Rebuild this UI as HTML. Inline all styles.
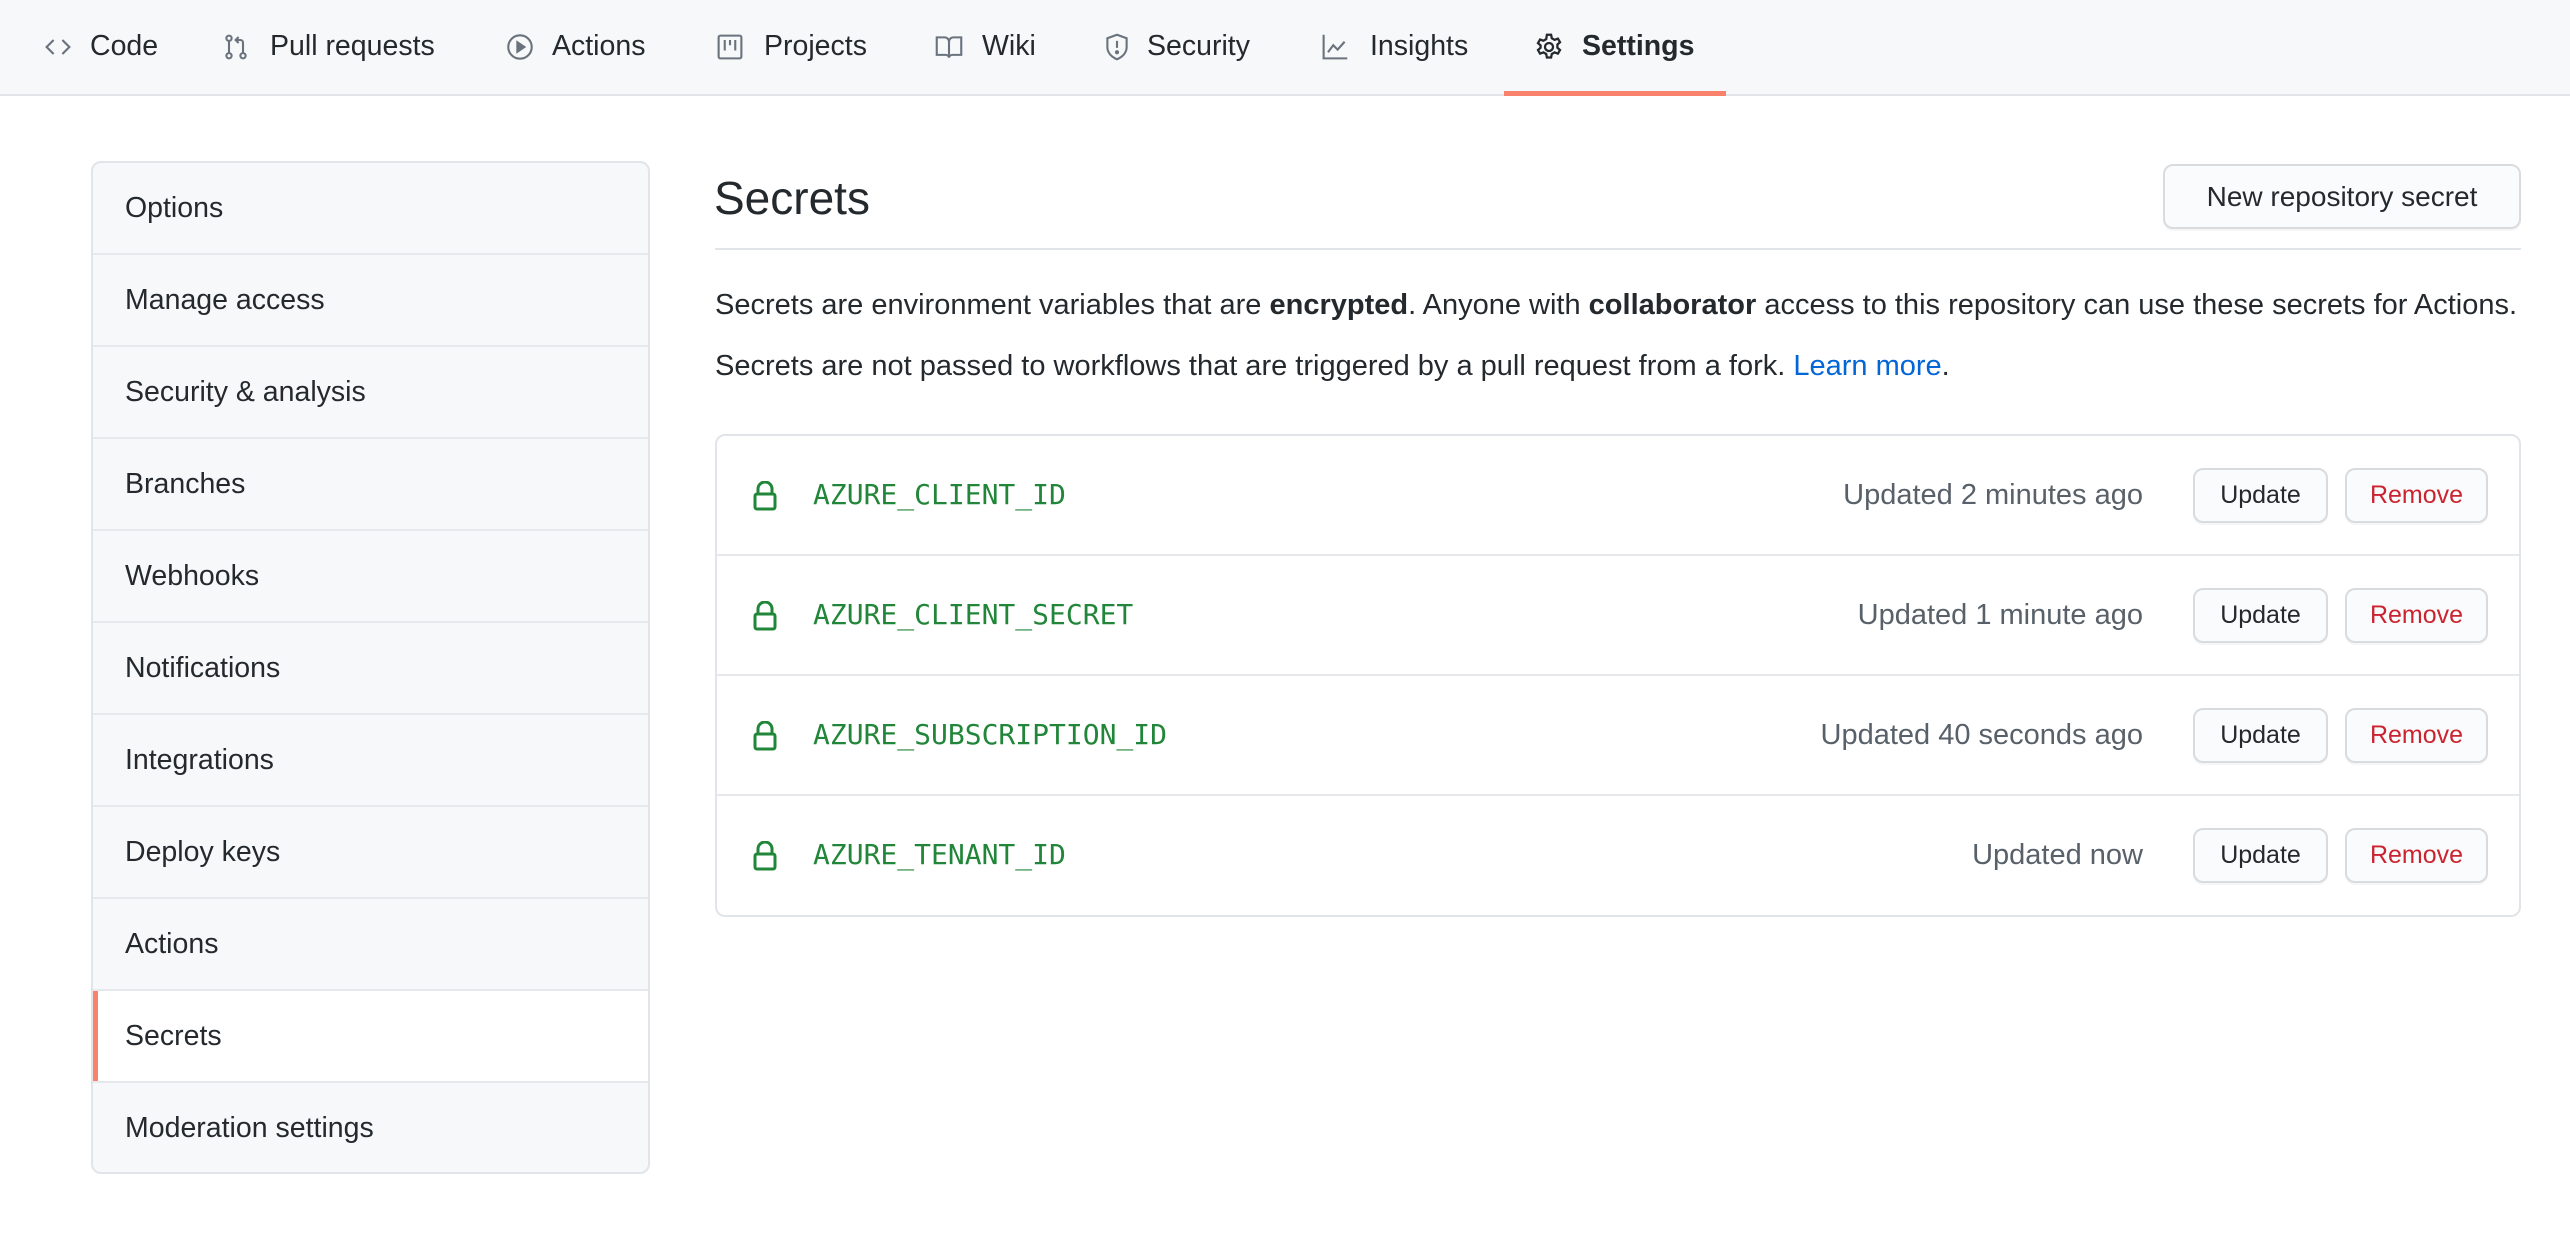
<!DOCTYPE html>
<html><head><meta charset="utf-8"><style>
*{box-sizing:border-box;margin:0;padding:0}
body{width:2570px;height:1234px;background:#fff;font-family:"Liberation Sans",sans-serif;color:#24292e;position:relative;overflow:hidden}
.nav{position:absolute;left:0;top:0;width:2570px;height:96px;background:#f6f8fa;border-bottom:2px solid #e1e4e8}
.ni{position:absolute;top:0;height:94px;line-height:92px;font-size:28.5px;color:#24292e;white-space:nowrap}
.ni svg{position:absolute;top:33px;width:28px;height:28px}
.ul{position:absolute;left:1504px;top:91px;width:222px;height:5px;background:#f9826c}
.side{position:absolute;left:91px;top:161px;width:559px;height:1013px;border:2px solid #e1e4e8;border-radius:10px;background:#f6f8fa;overflow:hidden}
.si{height:92px;line-height:90px;padding-left:32px;font-size:28.5px;border-bottom:2px solid #e6e8eb;position:relative}
.si:last-child{border-bottom:none}
.si.sel{background:#fff}
.si.sel:before{content:"";position:absolute;left:0;top:0;bottom:0;width:5px;background:#f9826c}
h2{position:absolute;left:714px;top:170px;font-size:46px;font-weight:400;line-height:56px}
.btn{position:absolute;background:#fafbfc;border:2px solid #d9dcdf;border-radius:10px;text-align:center;font-weight:700;color:#24292e;box-shadow:0 2px 0 rgba(27,31,35,.04)}
.hr{position:absolute;left:715px;top:248px;width:1806px;height:2px;background:#e1e4e8}
.p{position:absolute;left:715px;font-size:29px;line-height:36px;white-space:nowrap}
.box{position:absolute;left:715px;top:434px;width:1806px;height:483px;border:2px solid #e1e4e8;border-radius:10px}
.row{position:absolute;left:0;width:1802px;height:120px;border-bottom:2px solid #e6e8eb}
.lock{position:absolute;left:36px;top:45px}
.nm{position:absolute;left:96px;top:0;line-height:118px;font-family:"DejaVu Sans Mono","Liberation Mono",monospace;font-size:28px;color:#22863a}
.up{position:absolute;right:376px;line-height:118px;top:0;font-size:29px;color:#586069}
.b1{left:1476px;top:32px;width:135px;height:55px;line-height:51px;font-size:25px;font-weight:400}
.b2{left:1628px;top:32px;width:143px;height:55px;line-height:51px;font-size:25px;color:#cb2431;font-weight:400}
</style></head><body>
<div class="nav">
 <div class="ni" style="left:44px"><svg style="left:0" viewBox="0 0 16 16" fill="none" stroke="#6a737d" stroke-width="1.2"><path d="M5.5 4L1.5 8l4 4M10.5 4l4 4-4 4"/></svg><span style="margin-left:46px">Code</span></div>
 <div class="ni" style="left:222px"><svg style="left:0" viewBox="0 0 16 16" fill="none" stroke="#6a737d" stroke-width="1.2"><circle cx="4" cy="3" r="1.5"/><circle cx="4" cy="13" r="1.5"/><path d="M4 4.5v7"/><circle cx="12" cy="13" r="1.5"/><path d="M12 11.5V5.5a1.5 1.5 0 0 0-1.5-1.5H8M9.5 2.3L7.8 4l1.7 1.7"/></svg><span style="margin-left:48px">Pull requests</span></div>
 <div class="ni" style="left:506px"><svg style="left:0" viewBox="0 0 16 16" fill="none" stroke="#6a737d" stroke-width="1.2"><circle cx="8" cy="8" r="6.7"/><path d="M6.5 5.3v5.4L10.5 8z" fill="#6a737d"/></svg><span style="margin-left:46px">Actions</span></div>
 <div class="ni" style="left:716px"><svg style="left:0" viewBox="0 0 16 16" fill="none" stroke="#6a737d" stroke-width="1.2"><rect x="1.5" y="1.5" width="13" height="13" rx="1"/><path d="M5 4v6M8 4v3M11 4v6"/></svg><span style="margin-left:48px">Projects</span></div>
 <div class="ni" style="left:935px"><svg style="left:0" viewBox="0 0 16 16" fill="none" stroke="#6a737d" stroke-width="1.2"><path d="M1 2.5h4.5A2.5 2.5 0 0 1 8 5v9a2 2 0 0 0-2-1.5H1zM15 2.5h-4.5A2.5 2.5 0 0 0 8 5v9a2 2 0 0 1 2-1.5h5z"/></svg><span style="margin-left:47px">Wiki</span></div>
 <div class="ni" style="left:1103px"><svg style="left:0" viewBox="0 0 16 16" fill="none" stroke="#6a737d" stroke-width="1.2"><path d="M8 1L2.5 3v5c0 3.5 2.7 5.8 5.5 7 2.8-1.2 5.5-3.5 5.5-7V3z"/><path d="M8 4.5v4"/><circle cx="8" cy="11" r=".6" fill="#6a737d"/></svg><span style="margin-left:44px">Security</span></div>
 <div class="ni" style="left:1321px"><svg style="left:0" viewBox="0 0 16 16" fill="none" stroke="#6a737d" stroke-width="1.2"><path d="M1.5 1v13.5H15M4 11l3-4 2.5 2.5L13.5 5"/></svg><span style="margin-left:49px">Insights</span></div>
 <div class="ni" style="left:1535px;font-weight:700"><svg style="left:0" viewBox="0 0 16 16" fill="none" stroke="#24292e" stroke-width="1.3"><circle cx="8" cy="8" r="2.3"/><path d="M6.8 1h2.4l.4 2 1.6.9 1.9-.7 1.2 2.1-1.5 1.3v1.8l1.5 1.3-1.2 2.1-1.9-.7-1.6.9-.4 2H6.8l-.4-2-1.6-.9-1.9.7-1.2-2.1 1.5-1.3V7.1L1.7 5.8l1.2-2.1 1.9.7 1.6-.9z"/></svg><span style="margin-left:47px">Settings</span></div>
 <div class="ul"></div>
</div>
<div class="side">
 <div class="si">Options</div><div class="si">Manage access</div><div class="si">Security &amp; analysis</div><div class="si">Branches</div><div class="si">Webhooks</div><div class="si">Notifications</div><div class="si">Integrations</div><div class="si">Deploy keys</div><div class="si">Actions</div><div class="si sel">Secrets</div><div class="si">Moderation settings</div>
</div>
<h2>Secrets</h2>
<div class="btn" style="left:2163px;top:164px;width:358px;height:65px;line-height:61px;font-size:28px;font-weight:400">New repository secret</div>
<div class="hr"></div>
<div class="p" style="top:287px">Secrets are environment variables that are <b>encrypted</b>. Anyone with <b>collaborator</b> access to this repository can use these secrets for Actions.</div>
<div class="p" style="top:348px">Secrets are not passed to workflows that are triggered by a pull request from a fork. <span style="color:#0366d6">Learn more</span>.</div>
<div class="box">
 <div class="row" style="top:0"><svg class="lock" width="24" height="30" viewBox="0 0 24 30" fill="none" stroke="#22863a" stroke-width="3"><path d="M5 13V8a7 7 0 0 1 14 0v5"/><rect x="2" y="13" width="20" height="15" rx="2"/></svg><div class="nm">AZURE_CLIENT_ID</div><div class="up">Updated 2 minutes ago</div><div class="btn b1">Update</div><div class="btn b2">Remove</div></div>
 <div class="row" style="top:120px"><svg class="lock" width="24" height="30" viewBox="0 0 24 30" fill="none" stroke="#22863a" stroke-width="3"><path d="M5 13V8a7 7 0 0 1 14 0v5"/><rect x="2" y="13" width="20" height="15" rx="2"/></svg><div class="nm">AZURE_CLIENT_SECRET</div><div class="up">Updated 1 minute ago</div><div class="btn b1">Update</div><div class="btn b2">Remove</div></div>
 <div class="row" style="top:240px"><svg class="lock" width="24" height="30" viewBox="0 0 24 30" fill="none" stroke="#22863a" stroke-width="3"><path d="M5 13V8a7 7 0 0 1 14 0v5"/><rect x="2" y="13" width="20" height="15" rx="2"/></svg><div class="nm">AZURE_SUBSCRIPTION_ID</div><div class="up">Updated 40 seconds ago</div><div class="btn b1">Update</div><div class="btn b2">Remove</div></div>
 <div class="row" style="top:360px;border-bottom:none"><svg class="lock" width="24" height="30" viewBox="0 0 24 30" fill="none" stroke="#22863a" stroke-width="3"><path d="M5 13V8a7 7 0 0 1 14 0v5"/><rect x="2" y="13" width="20" height="15" rx="2"/></svg><div class="nm">AZURE_TENANT_ID</div><div class="up">Updated now</div><div class="btn b1">Update</div><div class="btn b2">Remove</div></div>
</div>
</body></html>
